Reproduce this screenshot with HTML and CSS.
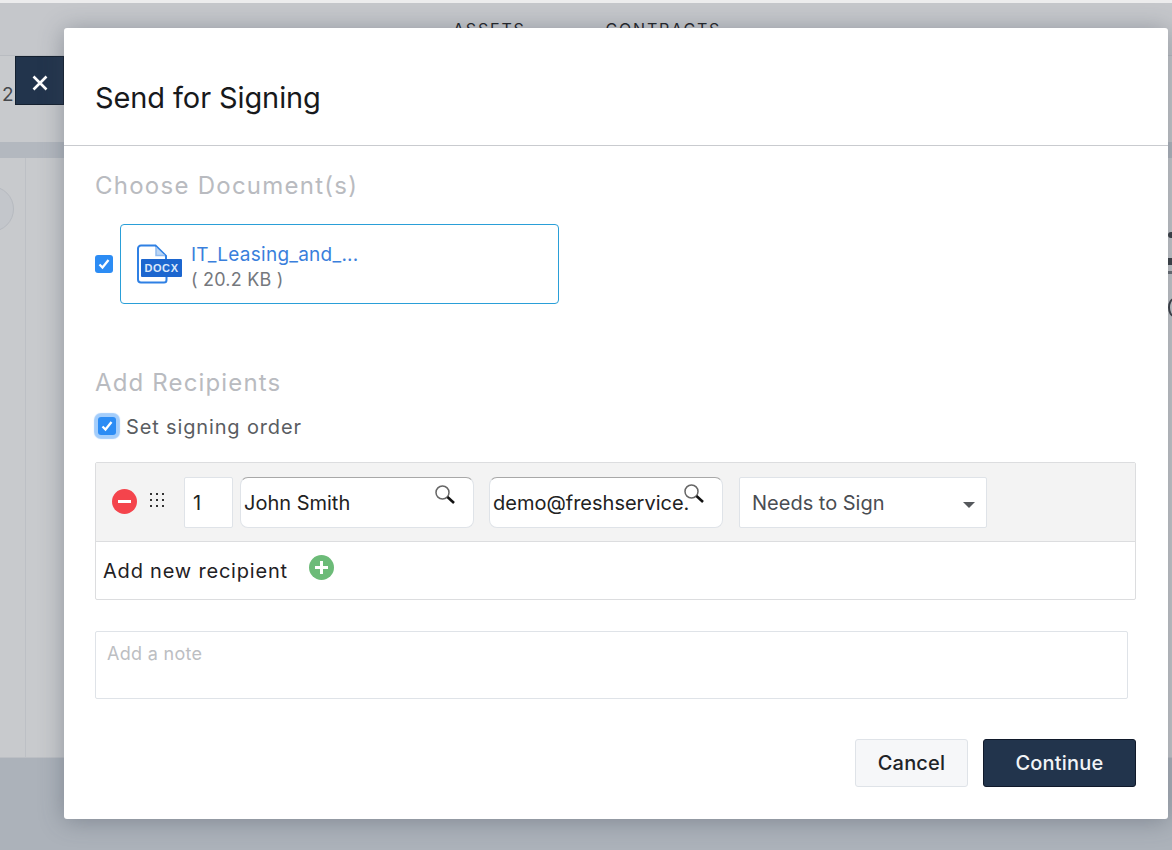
FILE: index.html
```html
<!DOCTYPE html>
<html lang="en">
<head>
    <meta charset="UTF-8">
    <meta name="viewport" content="width=device-width, initial-scale=1.0">
    <title>Send for Signing</title>
    <link rel="stylesheet" href="styles.css">
</head>
<body>

    <!-- Dimmed page behind the modal -->
    <div class="page">
        <div class="top-nav">
            <span>ASSETS</span>
            <span>CONTRACTS</span>
        </div>
        <div class="sub-header"><span class="sub-num">2</span></div>
        <div class="band"></div>
        <div class="page-body">
            <div class="page-col"></div>
        </div>
        <div class="page-footer"></div>
    </div>
    <div class="avatar"></div>

    <!-- Bits of page text showing past the modal's right edge -->
    <div class="edge-marks">
        <span class="edge-mark edge-a"></span>
        <span class="edge-mark edge-b"></span>
        <span class="edge-mark edge-c"></span>
        <span class="edge-curve"></span>
    </div>

    <!-- Close tab -->
    <div class="close-tab">
        <svg width="18" height="18" viewBox="0 0 18 18"><path d="M2.500 2.500l13 13M15.500 2.500l-13 13" stroke="#fff" stroke-width="2.600" fill="none"/></svg>
    </div>

    <!-- Modal -->
    <div class="modal">
        <div class="modal-header">
            <h1>Send for Signing</h1>
        </div>
        <div class="modal-body">
            <h2 class="section-title doc-title">Choose Document(s)</h2>
            <div class="doc-row">
                <span class="check">
                    <svg width="14" height="14" viewBox="0 0 14 14"><path d="M2.500 7.500l3 3 6-7.500" stroke="#fff" stroke-width="2.300" fill="none"/></svg>
                </span>
                <div class="doc-card">
                    <svg class="doc-icon" width="47" height="40" viewBox="0 0 47 40">
                        <path d="M2 16V4.500a3 3 0 0 1 3-3h14.500L30 12v3" fill="none" stroke="#2f80e4" stroke-width="2"/>
                        <path d="M2 33v2.500a3 3 0 0 0 3 3h23a2.500 2.500 0 0 0 2.500-2.500V33" fill="none" stroke="#2f80e4" stroke-width="2"/>
                        <path d="M2 15v18" stroke="#2f80e4" stroke-width="2"/>
                        <path d="M20 3v8.500h9" fill="#bcd6f5" stroke="#8fbaf0" stroke-width="1.500"/>
                        <rect x="5" y="15" width="41" height="18" rx="1" fill="#1c66cf"/>
                        <text x="25.500" y="28" class="doc-icon-text" text-anchor="middle">DOCX</text>
                    </svg>
                    <div class="doc-info">
                        <a class="doc-name" href="#">IT_Leasing_and_...</a>
                        <span class="doc-size">( 20.2 KB )</span>
                    </div>
                </div>
            </div>

            <h2 class="section-title rec-title">Add Recipients</h2>
            <label class="order-row">
                <span class="check check-focus">
                    <svg width="14" height="14" viewBox="0 0 14 14"><path d="M2.500 7.500l3 3 6-7.500" stroke="#fff" stroke-width="2.300" fill="none"/></svg>
                </span>
                Set signing order
            </label>

            <div class="recipients">
                <div class="recipient-row">
                    <span class="round-btn remove"></span>
                    <svg class="grip" width="16" height="16" viewBox="0 0 16 16" fill="#333">
                        <rect x="0" y="1" width="2" height="2"/><rect x="6" y="1" width="2" height="2"/><rect x="12" y="1" width="2" height="2"/>
                        <rect x="0" y="7" width="2" height="2"/><rect x="6" y="7" width="2" height="2"/><rect x="12" y="7" width="2" height="2"/>
                        <rect x="0" y="13" width="2" height="2"/><rect x="6" y="13" width="2" height="2"/><rect x="12" y="13" width="2" height="2"/>
                    </svg>
                    <div class="field order-num">1</div>
                    <div class="field lookup name-field">
                        John Smith
                        <svg class="search" width="22" height="22" viewBox="0 0 22 22"><circle cx="8.500" cy="8.500" r="6.500" fill="#fff" stroke="#666" stroke-width="1.500"/><path d="M13.500 13l6.500 6" stroke="#111" stroke-width="2.600"/></svg>
                    </div>
                    <div class="field lookup email-field">
                        demo@freshservice.
                        <svg class="search" width="22" height="22" viewBox="0 0 22 22"><circle cx="8.500" cy="8.500" r="6.500" fill="#fff" stroke="#666" stroke-width="1.500"/><path d="M13.500 13l6.500 6" stroke="#111" stroke-width="2.600"/></svg>
                    </div>
                    <div class="field role-select">
                        Needs to Sign
                        <span class="caret"></span>
                    </div>
                </div>
                <div class="add-row">
                    Add new recipient
                    <span class="round-btn add"></span>
                </div>
            </div>

            <div class="note">Add a note</div>

            <div class="modal-actions">
                <button class="btn btn-cancel">Cancel</button>
                <button class="btn btn-continue">Continue</button>
            </div>
        </div>
    </div>

</body>
</html>
```

FILE: styles.css
```css
/* General styles */
* {
    box-sizing: border-box;
    margin: 0;
    padding: 0;
}

body {
    width: 1172px;
    height: 850px;
    overflow: hidden;
    position: relative;
    font-family: Inter, "Liberation Sans", sans-serif;
    background: #acb2ba;
    color: #222;
}

/* Page behind the modal */
.page {
    height: 850px;
    display: flex;
    flex-direction: column;
    border-top: 3px solid #ececed;
}

.top-nav {
    height: 53px;
    background: #c5c7cb;
    border-bottom: 1px solid #b9bcc1;
    display: flex;
    gap: 80px;
    padding: 16px 0 0 453px;
    font-size: 16px;
    letter-spacing: 1.8px;
    color: #1f2327;
}

.sub-header {
    height: 86px;
    background: #c8cacd;
    padding: 27px 0 0 2px;
    font-size: 19px;
    color: #45484c;
}

.band {
    height: 16px;
    background: #b3b8bf;
}

.page-body {
    height: 600px;
    background: #c8cacd;
    border-bottom: 1px solid #bcbfc4;
}

.page-col {
    width: 26px;
    height: 100%;
    border-right: 1px solid #bdc0c5;
}

.page-footer {
    flex: 1;
    background: #acb2ba;
}

.avatar {
    position: absolute;
    left: -32px;
    top: 186px;
    width: 46px;
    height: 46px;
    border-radius: 50%;
    background: #c3c6cb;
    border: 1px solid #b6bac0;
}

.edge-marks {
    position: absolute;
    left: 1168px;
    top: 232px;
    width: 4px;
}

.edge-mark {
    display: block;
    background: #3a3e44;
}

.edge-a {
    height: 6px;
    border-radius: 3px 0 0 3px;
}

.edge-b {
    height: 7px;
    margin-top: 20px;
}

.edge-c {
    height: 3px;
    margin-top: 6px;
    background: #6a6e74;
}

.edge-curve {
    display: block;
    width: 12px;
    height: 19px;
    margin-top: 24px;
    border: 2px solid #3a3e44;
    border-radius: 50%;
}

/* Close tab */
.close-tab {
    position: absolute;
    left: 15px;
    top: 56px;
    width: 49px;
    height: 49px;
    padding-top: 4px;
    background: #22344c;
    border: 1px solid #14202f;
    display: flex;
    align-items: center;
    justify-content: center;
}

/* Modal */
.modal {
    position: absolute;
    left: 64px;
    top: 28px;
    width: 1104px;
    height: 791px;
    background: #fff;
    border-radius: 3px;
    box-shadow: 0 2px 24px rgba(60, 70, 85, 0.4);
}

.modal-header {
    height: 118px;
    border-bottom: 1px solid #c9cbcf;
    padding: 52px 0 0 31px;
}

.modal-header h1 {
    font-size: 29px;
    font-weight: 400;
    line-height: 35px;
    letter-spacing: -0.1px;
    color: #17191c;
}

.modal-body {
    padding: 0 32px 0 31px;
}

.section-title {
    font-size: 24px;
    font-weight: 400;
    line-height: 30px;
    color: #b9bbc0;
}

.doc-title {
    padding-top: 25px;
    height: 54px;
    letter-spacing: 1.25px;
}

/* Document card */
.doc-row {
    display: flex;
    align-items: center;
    gap: 7px;
    margin-top: 24px;
}

.check {
    width: 18px;
    height: 18px;
    border-radius: 3px;
    background: #2c8cf4;
    display: flex;
    align-items: center;
    justify-content: center;
    flex-shrink: 0;
}

.doc-card {
    width: 439px;
    height: 80px;
    border: 1px solid #2a9fd8;
    border-radius: 4px;
    display: flex;
    align-items: center;
    gap: 8px;
    padding: 0 0 0 15px;
}

.doc-icon {
    margin-top: -1px;
    flex-shrink: 0;
}

.doc-icon-text {
    font-family: "Liberation Sans", sans-serif;
    font-size: 11px;
    font-weight: 700;
    letter-spacing: 0.6px;
    fill: #dbe8fa;
}

.doc-info {
    display: flex;
    flex-direction: column;
    margin-top: 5px;
}

.doc-name {
    font-size: 19px;
    line-height: 25px;
    letter-spacing: 0.25px;
    color: #3a7fdc;
    text-decoration: none;
}

.doc-size {
    font-size: 18px;
    line-height: 25px;
    letter-spacing: 0.2px;
    color: #75787d;
}

/* Recipients */
.rec-title {
    margin-top: 64px;
    letter-spacing: 1.15px;
}

.order-row {
    display: flex;
    align-items: center;
    gap: 10px;
    margin-top: 14px;
    height: 30px;
    font-size: 20px;
    letter-spacing: 0.85px;
    color: #5a5d62;
}

.check-focus {
    margin: -2px 0 0 3px;
    box-shadow: 0 0 1px 4px #a3cdfb;
}

.recipients {
    margin-top: 20px;
    width: 1041px;
    height: 138px;
    border: 1px solid #dcdddf;
    border-radius: 2px;
}

.recipient-row {
    height: 79px;
    background: #f3f3f3;
    border-bottom: 1px solid #dcdddf;
    display: flex;
    align-items: center;
    padding-left: 16px;
}

.round-btn {
    width: 25px;
    height: 25px;
    border-radius: 50%;
    position: relative;
    flex-shrink: 0;
}

.round-btn::before {
    content: "";
    position: absolute;
    left: 6px;
    right: 6px;
    top: 11px;
    height: 3px;
    background: #fff;
}

.remove {
    background: #f4444c;
    margin-top: -1px;
}

.add {
    background: #6cbb78;
    margin: -6px 0 0 21px;
}

.add::after {
    content: "";
    position: absolute;
    top: 6px;
    bottom: 6px;
    left: 11px;
    width: 3px;
    background: #fff;
}

.grip {
    margin: -5px 0 0 13px;
}

.field {
    height: 51px;
    padding-top: 2px;
    background: #fff;
    border: 1px solid #dfe3e8;
    display: flex;
    align-items: center;
    position: relative;
    font-size: 20px;
    color: #222;
    white-space: nowrap;
}

.order-num {
    width: 49px;
    margin-left: 18px;
    padding-left: 8px;
    border-radius: 2px;
}

.lookup {
    width: 234px;
    border-radius: 8px;
    border-top: 1px solid #a8a8a8;
    padding-left: 3px;
}

.name-field {
    margin-left: 7px;
}

.email-field {
    margin-left: 15px;
}

.search {
    position: absolute;
    right: 17px;
    top: 6px;
}

.email-field .search {
    top: 5px;
}

.role-select {
    width: 248px;
    margin-left: 16px;
    padding-left: 12px;
    border-radius: 2px;
    color: #4a4d52;
}

.caret {
    position: absolute;
    right: 11px;
    top: 24px;
    border-left: 6px solid transparent;
    border-right: 6px solid transparent;
    border-top: 6px solid #55585c;
}

.add-row {
    height: 57px;
    display: flex;
    align-items: center;
    padding-left: 7px;
    font-size: 20px;
    letter-spacing: 0.8px;
    color: #1f2124;
}

/* Note */
.note {
    margin-top: 31px;
    width: 1033px;
    height: 68px;
    border: 1px solid #dfe3e8;
    border-radius: 2px;
    padding: 11px 11px;
    font-size: 18px;
    letter-spacing: 0.3px;
    color: #bcbec2;
}

/* Buttons */
.modal-actions {
    display: flex;
    justify-content: flex-end;
    gap: 15px;
    margin-top: 40px;
}

.btn {
    height: 48px;
    border-radius: 3px;
    font-family: Inter, "Liberation Sans", sans-serif;
    font-size: 20px;
    font-weight: 500;
    letter-spacing: 0.2px;
    cursor: pointer;
}

.btn-cancel {
    width: 113px;
    background: #f6f7f9;
    border: 1px solid #dfe3e8;
    color: #1f2327;
}

.btn-continue {
    width: 153px;
    background: #22344c;
    border: 1px solid #10192a;
    color: #f2f4f7;
}
```
